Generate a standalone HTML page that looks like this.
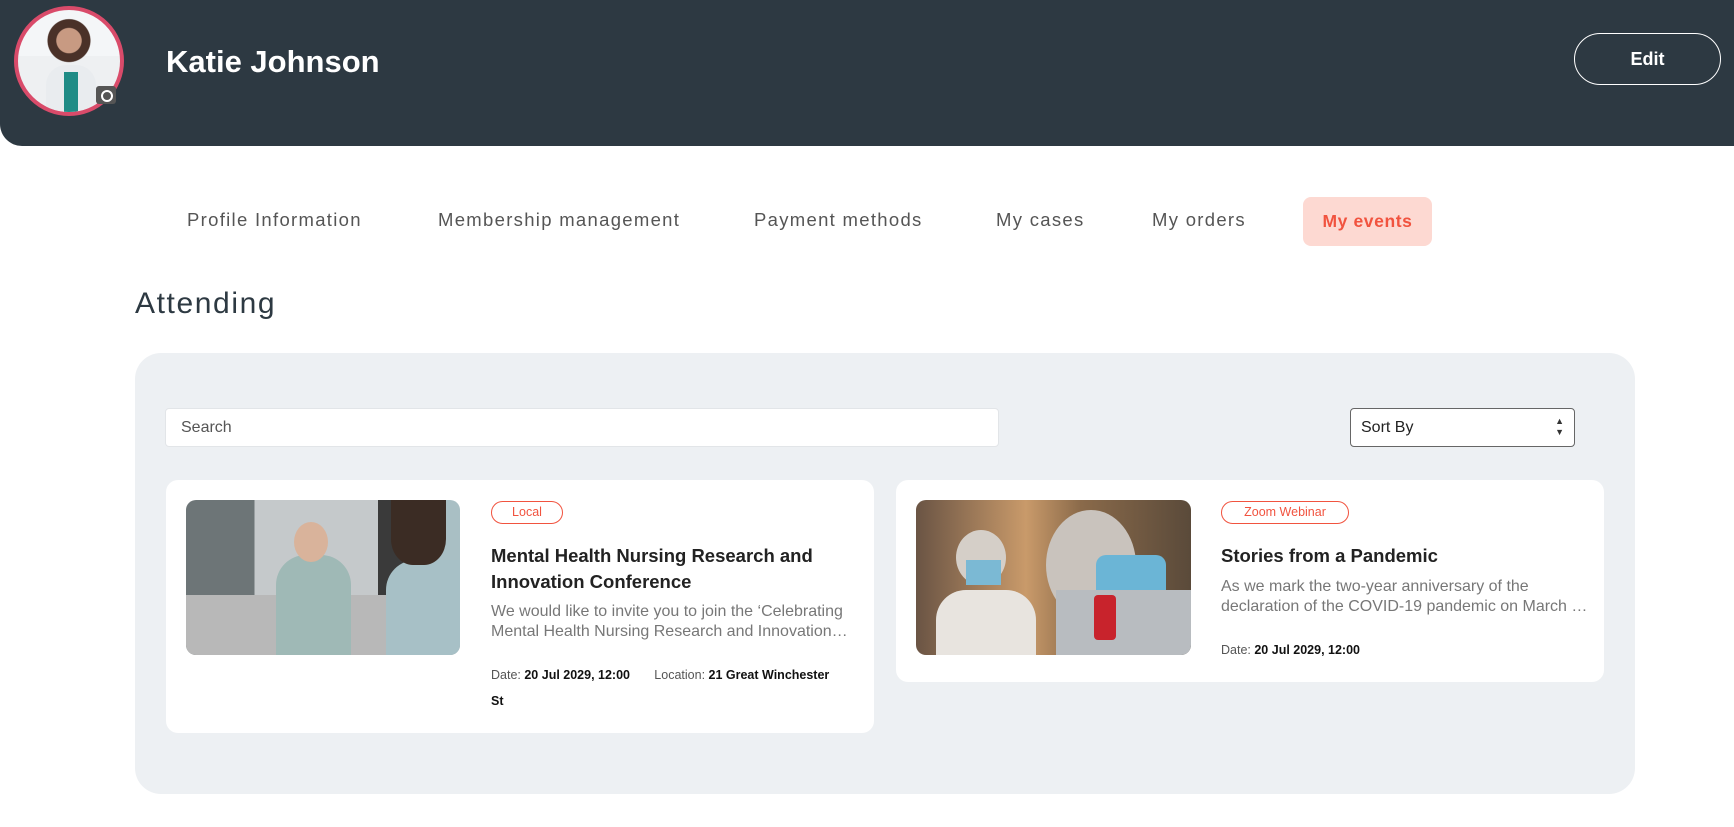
<!DOCTYPE html>
<html><head><meta charset="utf-8"><style>
*{box-sizing:border-box;margin:0;padding:0}
body{width:1734px;height:827px;background:#fff;font-family:"Liberation Sans",sans-serif;position:relative;overflow:hidden}
.hdr{position:absolute;left:0;top:0;width:1734px;height:146px;background:#2d3942;border-bottom-left-radius:22px}
.av{position:absolute;left:14px;top:6px;width:110px;height:110px;border-radius:50%;border:4px solid #d94b6a;background:radial-gradient(circle at 50% 30%,#c89a82 0 14%,#4a3128 15% 24%,transparent 25%),linear-gradient(180deg,#f4f6f8 0 45%,#eef0f2 45%);overflow:hidden}
.av:after{content:"";position:absolute;left:28px;top:55px;width:50px;height:60px;background:#e9ecef;border-radius:20px 20px 0 0}
.av:before{content:"";position:absolute;left:46px;top:62px;width:14px;height:45px;background:#1f8c86;z-index:2}
.cam{position:absolute;left:96px;top:86px;width:20px;height:18px;background:#555;border-radius:3px}
.cam:after{content:"";position:absolute;left:5px;top:4px;width:8px;height:8px;border:2px solid #fff;border-radius:50%}
.name{position:absolute;left:166px;top:44px;color:#fff;font-size:31px;font-weight:bold}
.edit{position:absolute;left:1574px;top:33px;width:147px;height:52px;border:1.5px solid #fff;border-radius:26px;color:#fff;font-weight:bold;font-size:18px;text-align:center;line-height:51px}
.tab{position:absolute;top:209px;font-size:18.5px;color:#555;letter-spacing:1.3px}
.pill{position:absolute;left:1303px;top:197px;width:129px;height:49px;background:#fdd9d2;border-radius:8px;color:#f1533f;font-weight:bold;font-size:17.5px;text-align:center;line-height:49px;letter-spacing:.6px}
.att{position:absolute;left:135px;top:287px;font-size:30px;color:#2d3942;letter-spacing:1.6px}
.panel{position:absolute;left:135px;top:353px;width:1500px;height:441px;background:#edf0f3;border-radius:26px}
.search{position:absolute;left:165px;top:408px;width:834px;height:39px;background:#fff;border:1px solid #e2e5e8;border-radius:4px;font-size:16px;color:#555;padding:10px 15px}
.sort{position:absolute;left:1350px;top:408px;width:225px;height:39px;background:#fff;border:1px solid #666;border-radius:4px;font-size:16px;color:#222;padding:10px 10px}
.sort span{position:absolute;right:10px;top:7px;font-size:9px;line-height:11px;color:#333}
.card{position:absolute;background:#fff;border-radius:12px}
.img{position:absolute;border-radius:10px;overflow:hidden}
.tag{position:absolute;height:23px;border:1px solid #f1533f;border-radius:12px;color:#f1533f;font-size:12.5px;text-align:center;line-height:21px}
.t{position:absolute;font-size:18.5px;font-weight:bold;color:#222;line-height:26px}
.d{position:absolute;font-size:16px;color:#777;line-height:20px}
.m{position:absolute;font-size:12.5px;color:#555;line-height:26px}
.m b{color:#111}
</style></head><body>
<div class="hdr">
<div class="av"></div><div class="cam"></div>
<div class="name">Katie Johnson</div>
<div class="edit">Edit</div>
</div>
<div class="tab" style="left:187px">Profile Information</div>
<div class="tab" style="left:438px">Membership management</div>
<div class="tab" style="left:754px">Payment methods</div>
<div class="tab" style="left:996px">My cases</div>
<div class="tab" style="left:1152px">My orders</div>
<div class="pill">My events</div>
<div class="att">Attending</div>
<div class="panel"></div>
<div class="search">Search</div>
<div class="sort">Sort By<span>▲<br>▼</span></div>

<div class="card" style="left:166px;top:480px;width:708px;height:253px"></div>
<div class="img" style="left:186px;top:500px;width:274px;height:155px;background:linear-gradient(90deg,#6d7577 0 25%,#c5c9cb 25% 70%,#3a3a3a 70% 82%,#a9bfc4 82%)">
<div style="position:absolute;left:0;top:95px;width:274px;height:60px;background:#b8b8b8"></div>
<div style="position:absolute;left:90px;top:55px;width:75px;height:100px;background:#9fb9b6;border-radius:30px 30px 0 0"></div>
<div style="position:absolute;left:108px;top:22px;width:34px;height:40px;background:#d9b39b;border-radius:50%"></div>
<div style="position:absolute;left:200px;top:60px;width:74px;height:95px;background:#a7c0c6;border-radius:30px 0 0 0"></div>
<div style="position:absolute;left:205px;top:0;width:55px;height:65px;background:#3b2c24;border-radius:0 0 40% 40%"></div>
</div>
<div class="tag" style="left:491px;top:501px;width:72px">Local</div>
<div class="t" style="left:491px;top:543px">Mental Health Nursing Research and<br>Innovation Conference</div>
<div class="d" style="left:491px;top:602px">We would like to invite you to join the ‘Celebrating<br>Mental Health Nursing Research and Innovation…</div>
<div class="m" style="left:491px;top:662px">Date: <b>20 Jul 2029, 12:00</b> &nbsp; &nbsp; &nbsp; Location: <b>21 Great Winchester</b><br><b>St</b></div>

<div class="card" style="left:896px;top:480px;width:708px;height:202px"></div>
<div class="img" style="left:916px;top:500px;width:275px;height:155px;background:linear-gradient(90deg,#6a5444,#c99a6a 40%,#8a6a4a 60%,#5a4a3a)">
<div style="position:absolute;left:130px;top:10px;width:90px;height:110px;background:#c9c3bd;border-radius:50%"></div>
<div style="position:absolute;left:180px;top:55px;width:70px;height:45px;background:#6bb5d6;border-radius:10px"></div>
<div style="position:absolute;left:140px;top:90px;width:135px;height:65px;background:#b8bcc0"></div>
<div style="position:absolute;left:40px;top:30px;width:50px;height:55px;background:#d5cfc8;border-radius:50%"></div>
<div style="position:absolute;left:50px;top:60px;width:35px;height:25px;background:#7bb9d4"></div>
<div style="position:absolute;left:20px;top:90px;width:100px;height:65px;background:#e8e4df;border-radius:30px 30px 0 0"></div>
<div style="position:absolute;left:178px;top:95px;width:22px;height:45px;background:#c8232c;border-radius:4px"></div>
</div>
<div class="tag" style="left:1221px;top:501px;width:128px">Zoom Webinar</div>
<div class="t" style="left:1221px;top:543px">Stories from a Pandemic</div>
<div class="d" style="left:1221px;top:577px">As we mark the two-year anniversary of the<br>declaration of the COVID-19 pandemic on March …</div>
<div class="m" style="left:1221px;top:637px">Date: <b>20 Jul 2029, 12:00</b></div>
</body></html>
